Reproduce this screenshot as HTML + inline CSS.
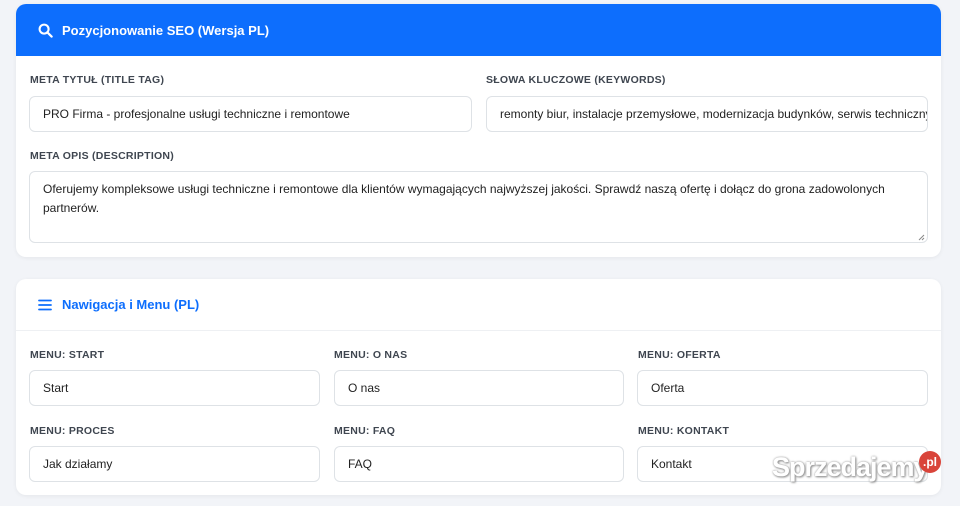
<!DOCTYPE html>
<html><head><meta charset="utf-8"><style>
*{box-sizing:border-box;margin:0;padding:0}
body{width:960px;height:506px;background:#f2f4f8;font-family:"Liberation Sans",sans-serif;position:relative;overflow:hidden;color:#212529}
.card{position:absolute;left:16px;width:925px;background:#fff;border-radius:10px;box-shadow:0 1px 4px rgba(0,0,0,.06);overflow:hidden}
.hd{height:52px;display:flex;align-items:center;padding-left:22px;font-weight:bold;font-size:13px}
.lbl{position:absolute;font-size:10.5px;font-weight:bold;color:#3f4650;letter-spacing:.25px;text-transform:uppercase}
.in{position:absolute;border:1px solid #dee2e6;border-radius:6px;height:36px;font-size:12px;padding:0 13px;display:flex;align-items:center;white-space:nowrap;overflow:hidden;color:#222}
</style></head><body>
<div class="card" style="top:4px;height:253px">
 <div class="hd" style="background:#0d6efd;color:#fff">
  <svg width="15" height="15" viewBox="0 0 16 16" style="margin-right:9px"><circle cx="6.5" cy="6.5" r="4.8" stroke="#fff" stroke-width="2.2" fill="none"/><path d="M10 10l4.5 4.5" stroke="#fff" stroke-width="2.4" stroke-linecap="round"/></svg>
  Pozycjonowanie SEO (Wersja PL)</div>
 <div class="lbl" style="left:14px;top:70px">Meta tytuł (Title tag)</div>
 <div class="in" style="left:13px;top:92px;width:443px">PRO Firma - profesjonalne usługi techniczne i remontowe</div>
 <div class="lbl" style="left:470px;top:70px">Słowa kluczowe (Keywords)</div>
 <div class="in" style="left:470px;top:92px;width:442px">remonty biur, instalacje przemysłowe, modernizacja budynków, serwis techniczny</div>
 <div class="lbl" style="left:14px;top:146px">Meta opis (Description)</div>
 <div class="in" style="left:13px;top:167px;width:899px;height:72px;align-items:flex-start;padding-top:8px;white-space:normal;line-height:19px">Oferujemy kompleksowe usługi techniczne i remontowe dla klientów wymagających najwyższej jakości. Sprawdź naszą ofertę i dołącz do grona zadowolonych partnerów.</div>
 <svg style="position:absolute;left:902px;top:230px" width="7" height="7" viewBox="0 0 7 7"><path d="M1 6L6 1M4 6L6 4" stroke="#888" stroke-width="1"/></svg>
</div>
<div class="card" style="top:279px;height:216px">
 <div class="hd" style="color:#0d6efd;border-bottom:1px solid #eef0f3">
  <svg width="14" height="12" viewBox="0 0 14 12" style="margin-right:10px"><path d="M1 1.5h12M1 6h12M1 10.5h12" stroke="#0d6efd" stroke-width="1.8" stroke-linecap="round"/></svg>
  Nawigacja i Menu (PL)</div>
 <div class="lbl" style="left:14px;top:70px">Menu: Start</div>
 <div class="in" style="left:13px;top:91px;width:291px">Start</div>
 <div class="lbl" style="left:318px;top:70px">Menu: O nas</div>
 <div class="in" style="left:318px;top:91px;width:290px">O nas</div>
 <div class="lbl" style="left:622px;top:70px">Menu: Oferta</div>
 <div class="in" style="left:621px;top:91px;width:291px">Oferta</div>
 <div class="lbl" style="left:14px;top:146px">Menu: Proces</div>
 <div class="in" style="left:13px;top:167px;width:291px">Jak działamy</div>
 <div class="lbl" style="left:318px;top:146px">Menu: FAQ</div>
 <div class="in" style="left:318px;top:167px;width:290px">FAQ</div>
 <div class="lbl" style="left:622px;top:146px">Menu: Kontakt</div>
 <div class="in" style="left:621px;top:167px;width:291px">Kontakt</div>
</div>
<div style="position:absolute;left:772px;top:452px;font-size:27px;font-weight:bold;color:#fff;text-shadow:0 0 2px #999,1px 1px 2px #888;letter-spacing:-1px">Sprzedajemy</div>
<div style="position:absolute;left:919px;top:451px;width:22px;height:22px;border-radius:50%;background:#d9443a;color:#fff;font-size:12px;font-weight:bold;text-align:center;line-height:22px">.pl</div>
</body></html>
